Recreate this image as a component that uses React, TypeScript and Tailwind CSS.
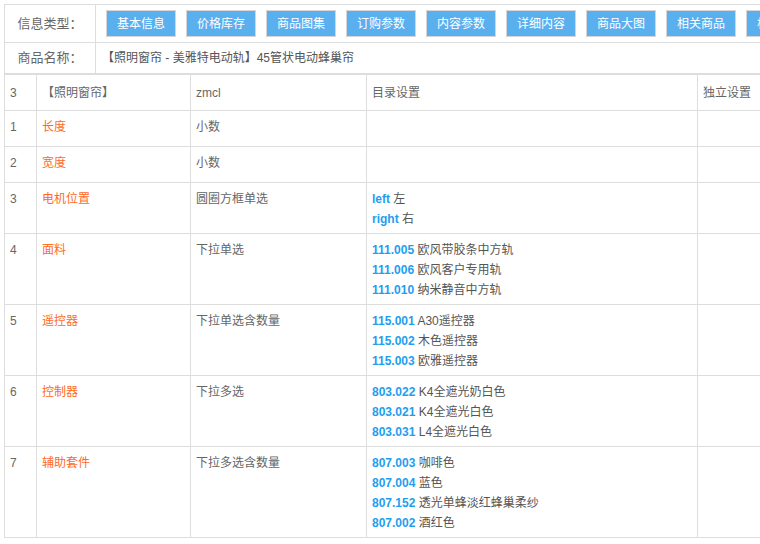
import React from "react";

const buttons = ["基本信息", "价格库存", "商品图集", "订购参数", "内容参数", "详细内容", "商品大图", "相关商品", "相关文章"];

type Opt = [string, string];
const rows: { n: string; name: string; type: string; opts: Opt[] }[] = [
  { n: "1", name: "长度", type: "小数", opts: [] },
  { n: "2", name: "宽度", type: "小数", opts: [] },
  { n: "3", name: "电机位置", type: "圆圈方框单选", opts: [["left", "左"], ["right", "右"]] },
  {
    n: "4",
    name: "面料",
    type: "下拉单选",
    opts: [
      ["111.005", "欧风带胶条中方轨"],
      ["111.006", "欧风客户专用轨"],
      ["111.010", "纳米静音中方轨"],
    ],
  },
  {
    n: "5",
    name: "遥控器",
    type: "下拉单选含数量",
    opts: [
      ["115.001", "A30遥控器"],
      ["115.002", "木色遥控器"],
      ["115.003", "欧雅遥控器"],
    ],
  },
  {
    n: "6",
    name: "控制器",
    type: "下拉多选",
    opts: [
      ["803.022", "K4全遮光奶白色"],
      ["803.021", "K4全遮光白色"],
      ["803.031", "L4全遮光白色"],
    ],
  },
  {
    n: "7",
    name: "辅助套件",
    type: "下拉多选含数量",
    opts: [
      ["807.003", "咖啡色"],
      ["807.004", "蓝色"],
      ["807.152", "透光单蜂淡红蜂巢柔纱"],
      ["807.002", "酒红色"],
    ],
  },
];

const cell = "border-r border-b border-[#dddddd] px-[5px] pt-[6px] pb-[4px] leading-[20px] min-h-[36px]";
const head = "border-r border-b border-[#dddddd] px-[5px] h-[36px] flex items-center";

export default function App() {
  return (
    <div
      className="w-[760px] h-[544px] overflow-hidden bg-white text-[#666666]"
      style={{ fontFamily: '"Liberation Sans", "Noto Sans CJK SC", sans-serif' }}
    >
      <div className="pl-[4px] pt-[4px] w-[840px]">
        {/* info table */}
        <div className="border-l border-t border-[#dddddd]">
          <div className="flex">
            <div className="w-[91px] h-[38px] shrink-0 border-r border-b border-[#dddddd] flex items-center justify-center text-[13px]">
              信息类型：
            </div>
            <div className="flex-1 h-[38px] border-r border-b border-[#dddddd] flex items-center gap-[10px] pl-[10px]">
              {buttons.map((b) => (
                <div
                  key={b}
                  className="w-[70px] h-[27px] shrink-0 bg-[#5aafef] border border-[#d6d6d6] text-white text-[12px] flex items-center justify-center"
                >
                  {b}
                </div>
              ))}
            </div>
          </div>
          <div className="flex">
            <div className="w-[91px] h-[31px] shrink-0 border-r border-b border-[#dddddd] flex items-center justify-center text-[13px]">
              商品名称：
            </div>
            <div className="flex-1 h-[31px] border-r border-b border-[#dddddd] flex items-center pl-[6px] text-[12px] text-[#555555]">
              【照明窗帘 - 美雅特电动轨】45管状电动蜂巢帘
            </div>
          </div>
        </div>

        {/* main table */}
        <div className="grid grid-cols-[32px_154px_176px_331px_140px] border-l border-t border-[#dddddd] text-[12px]">
          <div className={head}>3</div>
          <div className={head}>【照明窗帘】</div>
          <div className={head}>zmcl</div>
          <div className={head}>目录设置</div>
          <div className={head}>独立设置</div>
          {rows.map((r) => (
            <React.Fragment key={r.n}>
              <div className={cell}>{r.n}</div>
              <div className={`${cell} text-[#ff6a1f]`}>{r.name}</div>
              <div className={cell}>{r.type}</div>
              <div className={cell}>
                {r.opts.map(([c, d]) => (
                  <div key={c} className="whitespace-nowrap">
                    <span className="font-bold text-[#1e9ef0]">{c}</span>{" "}
                    <span className="text-[#555555]">{d}</span>
                  </div>
                ))}
              </div>
              <div className={cell}></div>
            </React.Fragment>
          ))}
        </div>
      </div>
    </div>
  );
}
